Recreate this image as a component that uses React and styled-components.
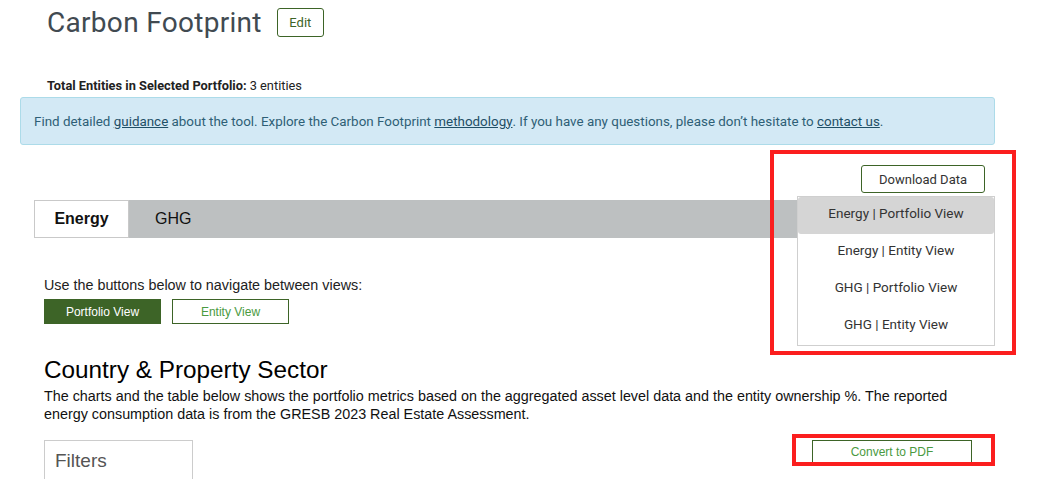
import React from "react";
import { styled, createGlobalStyle } from "styled-components";

const GlobalStyle = createGlobalStyle`
  body {
    margin: 0;
    background: #fff;
    font-family: "Liberation Sans", Arial, sans-serif;
  }
`;

const menuItems = [
  "Energy | Portfolio View",
  "Energy | Entity View",
  "GHG | Portfolio View",
  "GHG | Entity View",
];

export default function App() {
  return (
    <>
      <GlobalStyle />
      <Page>
        <TitleRow>
          <Title>Carbon Footprint</Title>
          <OutlineButton>Edit</OutlineButton>
        </TitleRow>

        <EntityCount>
          <strong>Total Entities in Selected Portfolio:</strong> 3 entities
        </EntityCount>

        <InfoBox>
          Find detailed <a href="#">guidance</a> about the tool. Explore the
          Carbon Footprint <a href="#">methodology</a>. If you have any
          questions, please don’t hesitate to <a href="#">contact us</a>.
        </InfoBox>

        <DownloadRow>
          <DownloadBox>
            <OutlineButton $dark $wide>Download Data</OutlineButton>
            <Menu>
              {menuItems.map((item, i) => (
                <MenuItem key={item} $active={i === 0}>
                  {item}
                </MenuItem>
              ))}
            </Menu>
            <RedFrame $top={-15} $left={-91} $width={246} $height={205} />
          </DownloadBox>
        </DownloadRow>

        <TabBar>
          <Tab $active>Energy</Tab>
          <Tab>GHG</Tab>
        </TabBar>

        <Hint>Use the buttons below to navigate between views:</Hint>
        <ViewButtons>
          <ViewButton $active>Portfolio View</ViewButton>
          <ViewButton>Entity View</ViewButton>
        </ViewButtons>

        <SectionTitle>Country &amp; Property Sector</SectionTitle>
        <SectionText>
          The charts and the table below shows the portfolio metrics based on
          the aggregated asset level data and the entity ownership %. The
          reported energy consumption data is from the GRESB 2023 Real Estate
          Assessment.
        </SectionText>

        <BottomRow>
          <FiltersBox>Filters</FiltersBox>
          <PdfWrap>
            <PdfButton>Convert to PDF</PdfButton>
            <RedFrame $top={-6} $left={-20} $width={203} $height={32} />
          </PdfWrap>
        </BottomRow>
      </Page>
    </>
  );
}

const Page = styled.div`
  width: 975px;
  margin-left: 20px;
`;

const TitleRow = styled.div`
  display: flex;
  align-items: center;
  gap: 15px;
  height: 45px;
  padding-left: 27px;
`;

const Title = styled.h1`
  margin: 0;
  font-family: Roboto, "Liberation Sans", sans-serif;
  font-weight: 400;
  font-size: 28px;
  letter-spacing: 0.3px;
  color: #414a51;
`;

const OutlineButton = styled.button`
  box-sizing: border-box;
  height: ${(p) => (p.$wide ? "28px" : "29px")};
  padding: 0 ${(p) => (p.$wide ? "17px" : "11.5px")};
  background: #fff;
  border: 1px solid #3d6427;
  border-radius: 3px;
  font-family: Roboto, "Liberation Sans", sans-serif;
  font-size: 13px;
  color: ${(p) => (p.$dark ? "#333" : "#3d6427")};
`;

const EntityCount = styled.div`
  margin: 33px 0 0 27px;
  font-family: Roboto, "Liberation Sans", sans-serif;
  font-size: 12.8px;
  line-height: 16px;
  color: #222;

  strong {
    font-weight: 700;
  }
`;

const InfoBox = styled.div`
  box-sizing: border-box;
  height: 48px;
  margin-top: 3px;
  padding: 0 13px;
  display: flex;
  align-items: center;
  background: #d3e9f5;
  border: 1px solid #acdbe9;
  border-radius: 3px;
  font-family: Roboto, "Liberation Sans", sans-serif;
  font-size: 13.4px;
  color: #2e5f76;
  white-space: pre;

  a {
    color: #1f4f66;
    text-decoration: underline;
  }
`;

const DownloadRow = styled.div`
  display: flex;
  justify-content: flex-end;
  margin: 20px 7px 0 0;
  position: relative;
  z-index: 2;
`;

const DownloadBox = styled.div`
  position: relative;
  width: 127px;
`;

const Menu = styled.div`
  position: absolute;
  top: 31px;
  right: -7px;
  width: 198px;
  box-sizing: border-box;
  background: #fff;
  border: 1px solid #cfcfcf;
  display: flex;
  flex-direction: column;
`;

const MenuItem = styled.div`
  box-sizing: border-box;
  height: 37px;
  padding-bottom: 5px;
  display: flex;
  align-items: center;
  justify-content: center;
  font-family: Roboto, "Liberation Sans", sans-serif;
  font-size: 13.5px;
  color: #333;
  background: ${(p) => (p.$active ? "#d5d5d5" : "#fff")};
  border-radius: ${(p) => (p.$active ? "3px" : "0")};
`;

const RedFrame = styled.div`
  position: absolute;
  top: ${(p) => p.$top}px;
  left: ${(p) => p.$left}px;
  width: ${(p) => p.$width}px;
  height: ${(p) => p.$height}px;
  box-sizing: border-box;
  border: 4px solid #fb1e1e;
  pointer-events: none;
`;

const TabBar = styled.div`
  display: flex;
  height: 38px;
  margin: 7px 0 0 14px;
  background: #bdc0c1;
`;

const Tab = styled.div`
  box-sizing: border-box;
  width: 95px;
  display: flex;
  align-items: center;
  justify-content: ${(p) => (p.$active ? "center" : "flex-start")};
  padding-left: ${(p) => (p.$active ? "0" : "26px")};
  font-size: 16px;
  font-weight: ${(p) => (p.$active ? 700 : 400)};
  color: #111;
  background: ${(p) => (p.$active ? "#fff" : "transparent")};
  border: ${(p) => (p.$active ? "1px solid #c9c9c9" : "none")};
`;

const Hint = styled.p`
  margin: 39px 0 0 24px;
  font-size: 14.35px;
  line-height: 16px;
  color: #222;
`;

const ViewButtons = styled.div`
  display: flex;
  gap: 11px;
  margin: 6px 0 0 24px;
`;

const ViewButton = styled.button`
  box-sizing: border-box;
  width: 117px;
  height: 25px;
  padding: 0;
  font-family: "Liberation Sans", Arial, sans-serif;
  font-size: 12px;
  border: 1px solid #3d6427;
  background: ${(p) => (p.$active ? "#3d6427" : "#fff")};
  color: ${(p) => (p.$active ? "#fff" : "#4a9a41")};
`;

const SectionTitle = styled.h2`
  margin: 32px 0 0 24px;
  font-size: 24.3px;
  line-height: 28px;
  font-weight: 400;
  color: #000;
`;

const SectionText = styled.p`
  max-width: 930px;
  margin: 3px 0 0 24px;
  font-size: 14.35px;
  line-height: 18px;
  color: #111;
`;

const BottomRow = styled.div`
  display: flex;
  justify-content: space-between;
  align-items: flex-start;
  margin: 17px 23px 0 24px;
`;

const FiltersBox = styled.div`
  box-sizing: border-box;
  width: 149px;
  height: 60px;
  padding: 9px 0 0 10px;
  border: 1px solid #cccccc;
  font-size: 19px;
  line-height: 22px;
  color: #555;
`;

const PdfWrap = styled.div`
  position: relative;
`;

const PdfButton = styled.button`
  box-sizing: border-box;
  width: 160px;
  height: 23px;
  padding: 0;
  background: #fff;
  border: 1px solid #3d6427;
  font-family: "Liberation Sans", Arial, sans-serif;
  font-size: 12px;
  color: #4a9a41;
`;
